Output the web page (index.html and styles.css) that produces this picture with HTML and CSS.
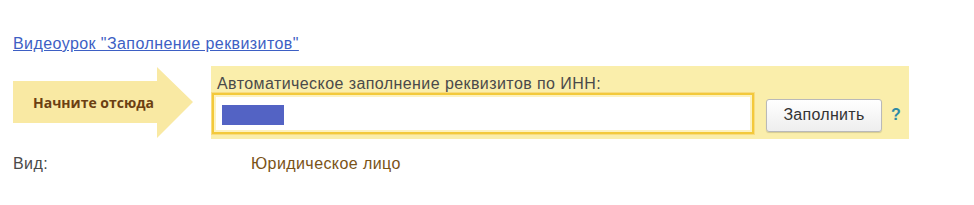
FILE: index.html
```html
<!DOCTYPE html>
<html lang="ru">
<head>
<meta charset="utf-8">
<link rel="stylesheet" href="styles.css">
</head>
<body>
<div class="page">
  <div class="link-row"><a class="video-link" href="#">Видеоурок "Заполнение реквизитов"</a></div>
  <div class="main">
    <div class="arrow"><span class="arrow-text">Начните отсюда</span></div>
    <div class="panel">
      <div class="panel-label">Автоматическое заполнение реквизитов по ИНН:</div>
      <div class="panel-row">
        <div class="inn-input"><span class="inn-value"></span></div>
        <button class="fill-btn">Заполнить</button>
        <span class="help">?</span>
      </div>
    </div>
  </div>
  <div class="kind-row">
    <span class="kind-label">Вид:</span>
    <span class="kind-value">Юридическое лицо</span>
  </div>
</div>
</body>
</html>
```
FILE: styles.css
```css
html, body {
  margin: 0;
  padding: 0;
  background: #ffffff;
}
.page {
  padding: 0 0 0 13px;
  font-family: "Liberation Sans", Arial, sans-serif;
  font-size: 16px;
  letter-spacing: 0.42px;
  color: #4a4a4a;
}
.link-row {
  padding-top: 34px;
  line-height: 19px;
  height: 19px;
}
.video-link {
  color: #3d5fc4;
  text-decoration: underline;
}
.main {
  display: flex;
  align-items: flex-start;
  margin-top: 13px;
}
.arrow {
  margin-top: 1px;
  width: 180px;
  height: 71px;
  background: #f9e9a3;
  clip-path: polygon(0 14px, 144px 14px, 144px 0, 180px 35px, 144px 71px, 144px 56px, 0 56px);
  display: flex;
  align-items: center;
  padding-left: 20px;
  box-sizing: border-box;
}
.arrow-text {
  font-family: "Open Sans", "Liberation Sans", sans-serif;
  font-weight: 700;
  font-size: 14px;
  letter-spacing: 0;
  color: #6b3f12;
}
.panel {
  margin-left: 18px;
  width: 698px;
  height: 73px;
  box-sizing: border-box;
  background: #faeeab;
  padding: 8px 0 0 1px;
}
.panel-label {
  padding-left: 5px;
  line-height: 19px;
  color: #4a4a4a;
}
.panel-row {
  display: flex;
  align-items: center;
  margin-top: 0;
}
.inn-input {
  width: 542px;
  height: 41px;
  box-sizing: border-box;
  border: 2px solid #f3c93b;
  box-shadow: 0 0 0 1px #f8dc80, inset 0 0 0 2px #fdf2bf;
  background: #ffffff;
  padding: 10px 0 0 8px;
}
.inn-value {
  display: block;
  width: 62px;
  height: 20px;
  background: #5363c4;
}
.fill-btn {
  margin-left: 12px;
  margin-top: 3px;
  width: 116px;
  height: 33px;
  border: 1px solid #b9b9b9;
  border-radius: 3px;
  background: linear-gradient(#ffffff, #eeeeee);
  box-shadow: 0 1px 1px rgba(0,0,0,0.15);
  font-family: "Liberation Sans", Arial, sans-serif;
  font-size: 16px;
  letter-spacing: 0.3px;
  color: #333333;
  padding: 0;
}
.help {
  margin-left: 9px;
  margin-top: 3px;
  font-weight: 700;
  font-size: 16px;
  letter-spacing: 0;
  color: #2f8aa6;
}
.kind-row {
  display: grid;
  grid-template-columns: 238px auto;
  margin-top: 16px;
  line-height: 18px;
}
.kind-label {
  color: #4a4a4a;
}
.kind-value {
  color: #7a5317;
}
```
